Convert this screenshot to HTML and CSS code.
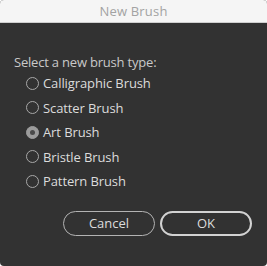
FILE: index.html
```html
<!DOCTYPE html>
<html lang="en">
<head>
    <meta charset="UTF-8">
    <title>New Brush</title>
    <link rel="stylesheet" href="styles.css">
</head>
<body>
    <div class="dialog">
        <div class="titlebar">New Brush</div>
        <div class="content">
            <p class="prompt">Select a new brush type:</p>
            <ul class="options">
                <li><span class="radio"></span>Calligraphic Brush</li>
                <li><span class="radio"></span>Scatter Brush</li>
                <li><span class="radio checked"></span>Art Brush</li>
                <li><span class="radio"></span>Bristle Brush</li>
                <li><span class="radio"></span>Pattern Brush</li>
            </ul>
            <div class="buttons">
                <button class="btn">Cancel</button>
                <button class="btn default">OK</button>
            </div>
        </div>
    </div>
</body>
</html>
```

FILE: styles.css
```css
body {
    margin: 0;
    background: #ffffff;
    font-family: 'Open Sans', 'DejaVu Sans', sans-serif;
}
.dialog {
    width: 267px;
    height: 266px;
    display: flex;
    flex-direction: column;
    border-radius: 4px;
    overflow: hidden;
    background: #323232;
}
.titlebar {
    height: 22px;
    line-height: 22px;
    background: #f5f5f5;
    border-bottom: 1px solid #cfcfcf;
    color: #a3a3a3;
    font-size: 13px;
    text-align: center;
    letter-spacing: 0.2px;
}
.content {
    flex: 1;
    padding: 0 14px;
}
.prompt {
    margin: 31px 0 0;
    color: #c9c9c9;
    font-size: 13px;
    line-height: 16px;
    letter-spacing: -0.2px;
}
.options {
    list-style: none;
    margin: 1px 0 0;
    padding: 0 0 0 12px;
}
.options li {
    display: flex;
    align-items: center;
    height: 24.5px;
    color: #dcdcdc;
    font-size: 13px;
    letter-spacing: -0.1px;
}
.radio {
    width: 11px;
    height: 11px;
    border: 1px solid #a8a8a8;
    border-radius: 50%;
    margin-right: 4px;
    box-sizing: content-box;
}
.radio.checked {
    background: #9c9c9c;
    border-color: #9c9c9c;
    position: relative;
}
.radio.checked::after {
    content: '';
    position: absolute;
    left: 3px;
    top: 3px;
    width: 5px;
    height: 5px;
    border-radius: 50%;
    background: #4a4a4a;
}
.buttons {
    display: flex;
    justify-content: flex-end;
    gap: 5px;
    margin-top: 17px;
    margin-right: 1px;
}
.btn {
    width: 92px;
    height: 25px;
    border-radius: 13px;
    background: transparent;
    border: 1px solid #b3b3b3;
    color: #dcdcdc;
    font-family: 'Open Sans', 'DejaVu Sans', sans-serif;
    font-size: 13px;
    padding: 0;
}
.btn.default {
    border: 2px solid #d2d2d2;
}
```
